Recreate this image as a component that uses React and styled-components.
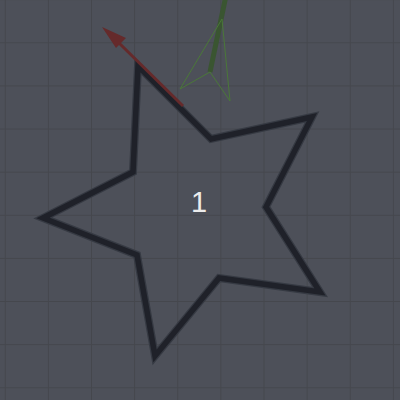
import React from 'react';
import styled, { createGlobalStyle } from 'styled-components';

const GlobalStyle = createGlobalStyle`
  html, body {
    margin: 0;
    padding: 0;
    background: #4d5059;
  }
`;

const starPoints = [
  [138, 66], [211, 139], [312, 117], [266, 207], [320, 292],
  [219, 278], [155, 356], [137, 255], [43, 218], [133, 172],
];

const App = () => {
  const pts = starPoints.map((p) => p.join(',')).join(' ');
  return (
    <>
      <GlobalStyle />
      <Viewport>
        <Scene viewBox="0 0 400 400" width="400" height="400">
          <polygon points={pts} fill="none" stroke="#363a43" strokeWidth="8" strokeLinejoin="miter" strokeMiterlimit="3" />
          <polygon points={pts} fill="none" stroke="#1f2129" strokeWidth="5.5" strokeLinejoin="miter" strokeMiterlimit="3" />

          {/* red axis arrow */}
          <line x1="183" y1="106" x2="118" y2="42" stroke="#652a2b" strokeWidth="3" />
          <polygon points="102,27 126,38 116,48" fill="#652a2b" />

          {/* green gizmo */}
          <line x1="225.5" y1="-2" x2="210" y2="72" stroke="#3a5531" strokeWidth="5" />
          <g stroke="#4a7838" strokeWidth="1" fill="none">
            <line x1="222" y1="19" x2="180" y2="89" />
            <line x1="222" y1="19" x2="230" y2="101" />
            <line x1="210" y1="72" x2="180" y2="89" />
            <line x1="210" y1="72" x2="230" y2="101" />
          </g>
        </Scene>
        <Label>1</Label>
      </Viewport>
    </>
  );
};

const Viewport = styled.div`
  position: relative;
  width: 400px;
  height: 400px;
  overflow: hidden;
  display: flex;
  align-items: center;
  justify-content: center;
  background-color: #4d5059;
  background-image:
    linear-gradient(to right, #45474d 0, #45474d 1px, transparent 1px),
    linear-gradient(to bottom, #45474d 0, #45474d 1px, transparent 1px);
  background-size: 43.125px 43.125px;
  background-position: 4.75px 42.3px;
`;

const Scene = styled.svg`
  position: absolute;
  left: 0;
  top: 0;
  display: block;
`;

const Label = styled.span`
  position: relative;
  left: -1px;
  top: 2px;
  font-family: 'Liberation Sans', Arial, sans-serif;
  font-size: 29px;
  line-height: 1;
  color: #ececec;
`;

export default App;
